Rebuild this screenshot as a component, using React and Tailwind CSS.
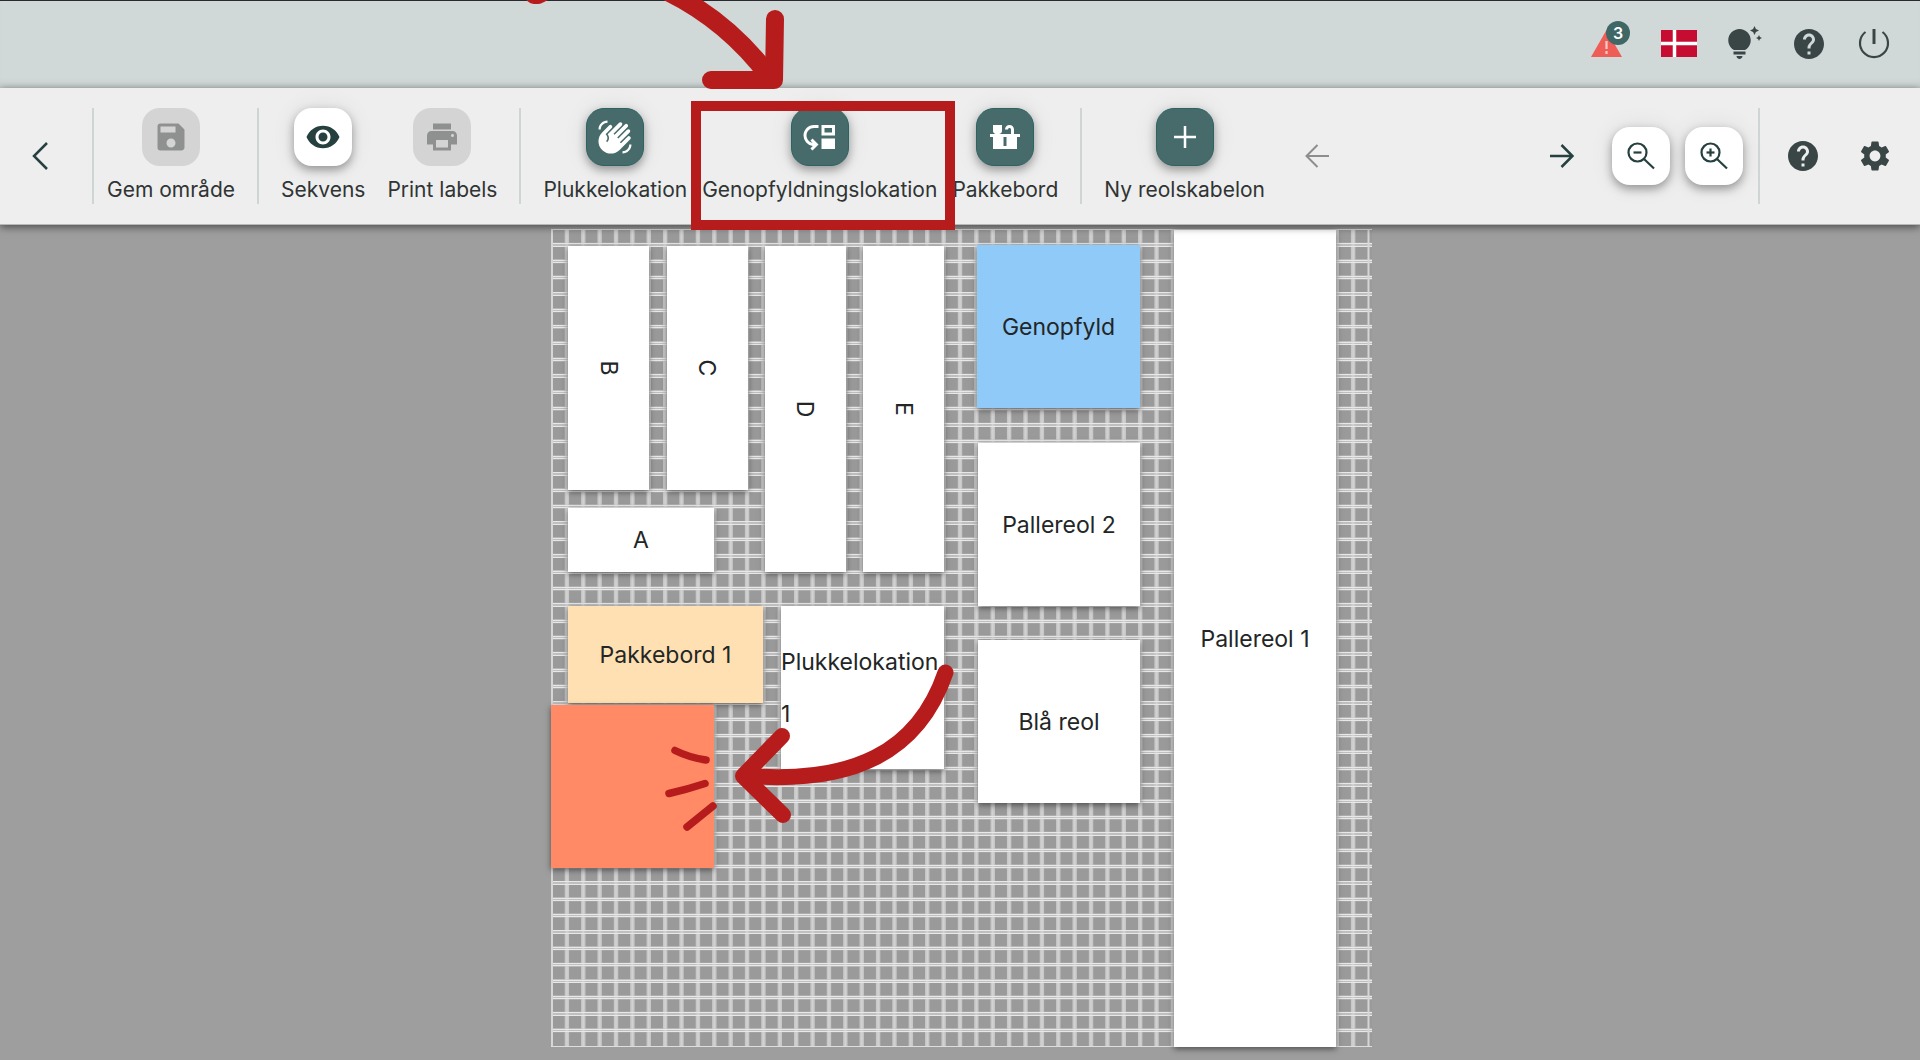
// src/pages/WarehouseMapPage.jsx
import React, { useState } from 'react';
import {
  MdSave,
  MdVisibility,
  MdPrint,
  MdWavingHand,
  MdMoveDown,
  MdCountertops,
  MdTipsAndUpdates,
  MdHelp,
  MdSettings,
} from 'react-icons/md';

const BOARD = { width: 821, height: 818, cells: 50 };

// Shelves and stations, in board pixels
const initialItems = [
  { id: 'b', name: 'B', x: 17, y: 17, w: 81, h: 244, color: 'bg-white', vertical: true },
  { id: 'c', name: 'C', x: 116, y: 17, w: 81, h: 244, color: 'bg-white', vertical: true },
  { id: 'd', name: 'D', x: 214, y: 17, w: 81, h: 326, color: 'bg-white', vertical: true },
  { id: 'e', name: 'E', x: 312, y: 17, w: 81, h: 326, color: 'bg-white', vertical: true },
  { id: 'a', name: 'A', x: 17, y: 279, w: 146, h: 64, color: 'bg-white' },
  { id: 'pakkebord', name: 'Pakkebord 1', x: 17, y: 377, w: 195, h: 97, color: 'bg-[#ffe0b2]' },
  { id: 'pluk', name: 'Plukkelokation 1', x: 230, y: 377, w: 163, h: 163, color: 'bg-white' },
  { id: 'genopfyld', name: 'Genopfyld', x: 426, y: 16, w: 163, h: 163, color: 'bg-[#90caf9]' },
  { id: 'palle2', name: 'Pallereol 2', x: 427, y: 214, w: 162, h: 163, color: 'bg-white' },
  { id: 'blaa', name: 'Blå reol', x: 427, y: 411, w: 162, h: 163, color: 'bg-white' },
  { id: 'palle1', name: 'Pallereol 1', x: 623, y: 1, w: 162, h: 817, color: 'bg-white' },
  { id: 'ny', name: '', x: 0, y: 476, w: 163, h: 163, color: 'bg-[#ff8a65]' },
];

const Separator = () => <div className="h-24 w-[2px] shrink-0 bg-[#cdd6d4]" />;

const variants = {
  disabled: 'bg-[#d4d4d4] text-[#8f9190]',
  light: 'bg-white text-[#25403f] shadow-[0_4px_10px_rgba(0,0,0,0.35),0_0_24px_rgba(0,0,0,0.08)]',
  primary:
    'border border-[#2c6463] bg-[#476b6b] text-white shadow-[0_4px_10px_rgba(0,0,0,0.35),0_0_24px_rgba(0,0,0,0.08)]',
};

const ToolButton = ({ label, variant, onClick, children }) => (
  <button
    type="button"
    disabled={variant === 'disabled'}
    onClick={onClick}
    className="flex shrink-0 flex-col items-center gap-[9px] whitespace-nowrap text-[21px] leading-[30px] text-[#303434]"
  >
    <span className={`flex size-[58px] items-center justify-center rounded-[18px] ${variants[variant]}`}>
      {children}
    </span>
    {label}
  </button>
);

const ZoomButton = ({ label, onClick, plus }) => (
  <button
    type="button"
    aria-label={label}
    onClick={onClick}
    className={`flex size-[58px] shrink-0 items-center justify-center rounded-[18px] ${variants.light}`}
  >
    <svg viewBox="0 0 28 28" className="size-7" fill="none" stroke="currentColor" strokeWidth="2.200">
      <circle cx="10.5" cy="10.5" r="9" />
      <path d="M17 17l10 9.500" />
      <path d="M6.500 10.500h8" />
      {plus && <path d="M10.500 6.500v8" />}
    </svg>
  </button>
);

const Header = () => (
  <header className="flex h-[88px] items-center justify-end border-t border-[#2a2a2e] bg-[#d0d9d8] pb-[2px] pr-[29px] text-[#3a4646] shadow-[inset_0_-8px_8px_-6px_rgba(0,0,0,0.08)]">
    <button type="button" aria-label="Advarsler" className="relative mr-[33px]">
      <svg viewBox="0 0 38 38" className="size-[38px]">
        <path d="M1 32L16.500 5 32 32z" fill="#ef5d57" />
        <path d="M16.500 16v8M16.500 26v3" stroke="#f8cbc8" strokeWidth="2.200" />
      </svg>
      <span className="absolute -top-1 left-4 flex size-6 items-center justify-center rounded-full bg-[#3f6766] text-base font-semibold text-white">
        3
      </span>
    </button>
    <button type="button" aria-label="Sprog: dansk" className="mr-[29px]">
      <svg viewBox="0 0 36 27" className="h-[27px] w-9">
        <path d="M0 0h36v27H0z" fill="#c60c30" />
        <path d="M13.500 0v27M0 13.500h36" stroke="#fff" strokeWidth="3.500" />
      </svg>
    </button>
    <button type="button" aria-label="Tips" className="mr-[29px]">
      <MdTipsAndUpdates className="size-9" />
    </button>
    <button type="button" aria-label="Hjælp" className="mr-[30px]">
      <MdHelp className="size-9" />
    </button>
    <button type="button" aria-label="Log ud">
      <svg viewBox="0 0 34 34" className="size-[34px]" fill="none" stroke="currentColor" strokeWidth="2.200">
        <path d="M8.500 5a14 14 0 1 0 17 0" />
        <path d="M17 2v15" strokeWidth="3" />
      </svg>
    </button>
  </header>
);

const Toolbar = ({ onAdd, onZoom }) => (
  <nav className="relative z-10 flex h-[137px] items-center justify-between border-b border-[#b8b8b8] bg-[#eeeeee] text-[#25403f] shadow-[0_2px_8px_rgba(0,0,0,0.55)]">
    <div className="flex items-center gap-[22px]">
      <div className="flex items-center gap-[13px]">
        <button type="button" aria-label="Tilbage" className="flex w-[79px] shrink-0 justify-center">
          <svg viewBox="0 0 16 28" className="h-7 w-4" fill="none" stroke="currentColor" strokeWidth="2.500">
            <path d="M15 1L2 14l13 13" />
          </svg>
        </button>
        <Separator />
        <ToolButton label="Gem område" variant="disabled">
          <MdSave className="size-9" />
        </ToolButton>
      </div>
      <Separator />
      <ToolButton label="Sekvens" variant="light">
        <MdVisibility className="size-9" />
      </ToolButton>
      <ToolButton label="Print labels" variant="disabled">
        <MdPrint className="size-9" />
      </ToolButton>
      <Separator />
      <div className="flex gap-[15px]">
        <ToolButton label="Plukkelokation" variant="primary" onClick={() => onAdd('Plukkelokation')}>
          <MdWavingHand className="size-9" />
        </ToolButton>
        <ToolButton label="Genopfyldningslokation" variant="primary" onClick={() => onAdd('Genopfyld')}>
          <MdMoveDown className="size-9" />
        </ToolButton>
        <ToolButton label="Pakkebord" variant="primary" onClick={() => onAdd('Pakkebord')}>
          <MdCountertops className="size-9" />
        </ToolButton>
      </div>
      <Separator />
      <ToolButton label="Ny reolskabelon" variant="primary">
        <svg viewBox="0 0 22 22" className="size-[22px]" stroke="currentColor" strokeWidth="2.500">
          <path d="M11 0v22M0 11h22" />
        </svg>
      </ToolButton>
      <button type="button" aria-label="Fortryd" disabled className="ml-[18px] text-[#8c8e8d]">
        <svg viewBox="0 0 24 24" className="size-6" fill="none" stroke="currentColor" strokeWidth="2">
          <path d="M24 12H2M12.500 1L1.500 12l11 11" />
        </svg>
      </button>
    </div>

    <div className="flex items-center pr-[27px]">
      <button type="button" aria-label="Gentag" className="mr-[38px]">
        <svg viewBox="0 0 24 24" className="size-6" fill="none" stroke="currentColor" strokeWidth="2.500">
          <path d="M0 12h22M11.500 1l11 11-11 11" />
        </svg>
      </button>
      <div className="mr-[25px] flex items-center gap-[15px]">
        <ZoomButton label="Zoom ud" onClick={() => onZoom(-0.1)} />
        <ZoomButton label="Zoom ind" plus onClick={() => onZoom(0.1)} />
        <Separator />
      </div>
      <button type="button" aria-label="Hjælp til området" className="mr-9 text-[#3a4646]">
        <MdHelp className="size-9" />
      </button>
      <button type="button" aria-label="Indstillinger" className="text-[#3a4646]">
        <MdSettings className="size-9" />
      </button>
    </div>
  </nav>
);

const GridLines = () => {
  const lines = Array.from({ length: BOARD.cells - 1 }, (_, i) => i + 1);
  const stepX = 16.38;
  const stepY = BOARD.height / BOARD.cells;
  return (
    <svg
      viewBox={`0 0 ${BOARD.width} ${BOARD.height}`}
      className="absolute inset-0 size-full"
      fill="none"
      aria-hidden="true"
    >
      {lines.map(i => (
        <path
          key={i}
          d={`M0 ${i * stepY - 0.5}H${BOARD.width}`}
          stroke="#bfbfbf"
          strokeWidth="4"
        />
      ))}
      {lines.map(i => (
        <g key={i}>
          <path d={`M${i * stepX - 0.5} 0V${BOARD.height}`} stroke="#c8c8c8" strokeWidth="4.400" />
          <path d={`M${i * stepX - 0.5} 0V${BOARD.height}`} stroke="#d2d2d2" strokeWidth="1.500" />
        </g>
      ))}
      {lines.map(i => (
        <path
          key={i}
          d={`M0 ${Math.round(i * stepY) - 1.5}H${BOARD.width}M0 ${Math.round(i * stepY + 0.3) + 0.5}H${BOARD.width}`}
          stroke="#e8e8e8"
          strokeWidth="1"
        />
      ))}
      <path d={`M1 0V${BOARD.height}M817.500 0V${BOARD.height}`} stroke="#d6d6d6" strokeWidth="2" />
      <path d={`M0 .5H${BOARD.width}M0 817.500H${BOARD.width}`} stroke="#dedede" strokeWidth="1" />
    </svg>
  );
};

const BoardItem = ({ item }) => (
  <div
    className={`absolute flex items-center justify-center text-[23px] leading-[52px] text-[#222626] shadow-[0_2px_6px_rgba(0,0,0,0.5)] ${item.color}`}
    style={{ left: item.x, top: item.y, width: item.w, height: item.h }}
  >
    <span className={item.vertical ? 'rotate-90' : ''}>{item.name}</span>
  </div>
);

// Red arrows of the guide, drawn on top of everything
const GuideMarks = () => (
  <svg
    viewBox="0 0 1920 1060"
    className="pointer-events-none absolute left-0 top-0 z-20 h-[1060px] w-[1920px]"
    fill="none"
    stroke="#b71c1c"
    strokeLinecap="round"
    strokeLinejoin="round"
    aria-hidden="true"
  >
    <path d="M534 -5h4l8 -4" strokeWidth="18" />
    <path d="M656 -14Q724 16 769 76" strokeWidth="19" />
    <path d="M775 19L774 80L711 80" strokeWidth="18" />
    <path d="M696 106h254v119H696z" strokeWidth="10" strokeLinejoin="miter" />
    <path d="M945.500 672.500C918 753 852 784 748 776" strokeWidth="16" />
    <path d="M782 736L743 776l40 39" strokeWidth="16" />
    <path d="M675 750.500q14 7 31 9.500M669 793.500q18 -4 36 -10M687 827l26 -21" strokeWidth="7.500" />
  </svg>
);

const App = () => {
  const [items, setItems] = useState(initialItems);
  const [zoom, setZoom] = useState(1);

  const addItem = (name) => {
    setItems(prev => [
      ...prev,
      { id: `${name}-${prev.length}`, name, x: 246, y: 640, w: 163, h: 163, color: 'bg-white' },
    ]);
  };

  return (
    <div className="relative flex min-h-screen flex-col overflow-hidden bg-[#9e9e9e] font-['Inter',sans-serif]">
      <Header />
      <Toolbar onAdd={addItem} onZoom={step => setZoom(prev => prev + step)} />
      <main className="flex grow justify-center pb-3 pl-[3px] pt-1">
        {/* the board keeps its own pixel size, like a drawing canvas */}
        <div
          className="relative h-[818px] w-[821px] shrink-0 bg-[#9a9a9a]"
          style={zoom === 1 ? undefined : { transform: `scale(${zoom})` }}
        >
          <GridLines />
          {items.map(item => (
            <BoardItem key={item.id} item={item} />
          ))}
        </div>
      </main>
      <GuideMarks />
    </div>
  );
};

export default App;
